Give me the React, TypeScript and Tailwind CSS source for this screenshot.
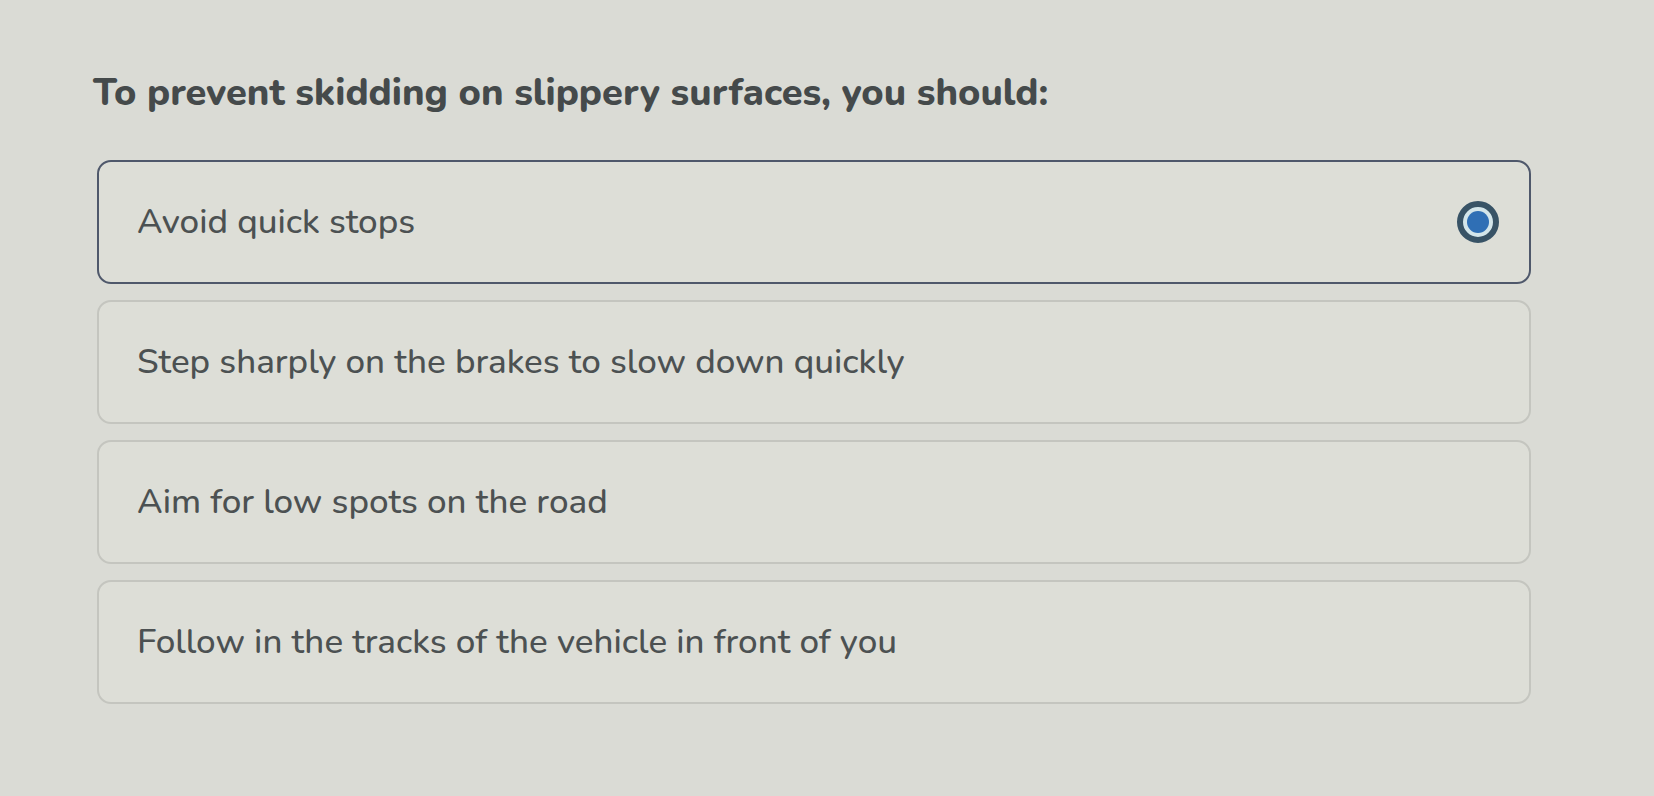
import { useState } from "react";

const OPTIONS = [
  "Avoid quick stops",
  "Step sharply on the brakes to slow down quickly",
  "Aim for low spots on the road",
  "Follow in the tracks of the vehicle in front of you",
];

function Radio({ checked }: { checked: boolean }) {
  if (!checked) return null;
  return (
    <span className="flex h-[42px] w-[42px] shrink-0 items-center justify-center rounded-full border-[6px] border-[#385366] bg-[#d3e5ea]">
      <span className="h-[22px] w-[22px] rounded-full bg-[#2f6fb5]" />
    </span>
  );
}

export default function App() {
  const [picked, setPicked] = useState(0);

  return (
    <div
      className="min-h-[796px] w-full bg-[#dadbd5] px-[93px] pt-[70px] text-[#4a4f50]"
      style={{ fontFamily: '"Nunito", Lato, "Open Sans", sans-serif' }}
    >
      <h1 className="text-[38px] font-extrabold leading-[46px] text-[#454a4b]">
        To prevent skidding on slippery surfaces, you should:
      </h1>

      <div className="mt-[44px] ml-[4px] flex w-[1434px] flex-col gap-[16px]">
        {OPTIONS.map((label, i) => {
          const active = i === picked;
          return (
            <button
              key={label}
              type="button"
              onClick={() => setPicked(i)}
              className={
                active
                  ? "flex h-[124px] items-center justify-between rounded-[14px] border-2 border-[#4f586b] bg-[#dddeD7] pl-[38px] pr-[30px] text-left"
                  : "flex h-[124px] items-center justify-between rounded-[14px] border-2 border-[#c4c5bf] bg-[#dddeD7] pl-[38px] pr-[30px] text-left"
              }
            >
              <span className="text-[35px] font-medium leading-[44px] text-[#4c5152]">{label}</span>
              <Radio checked={active} />
            </button>
          );
        })}
      </div>
    </div>
  );
}
